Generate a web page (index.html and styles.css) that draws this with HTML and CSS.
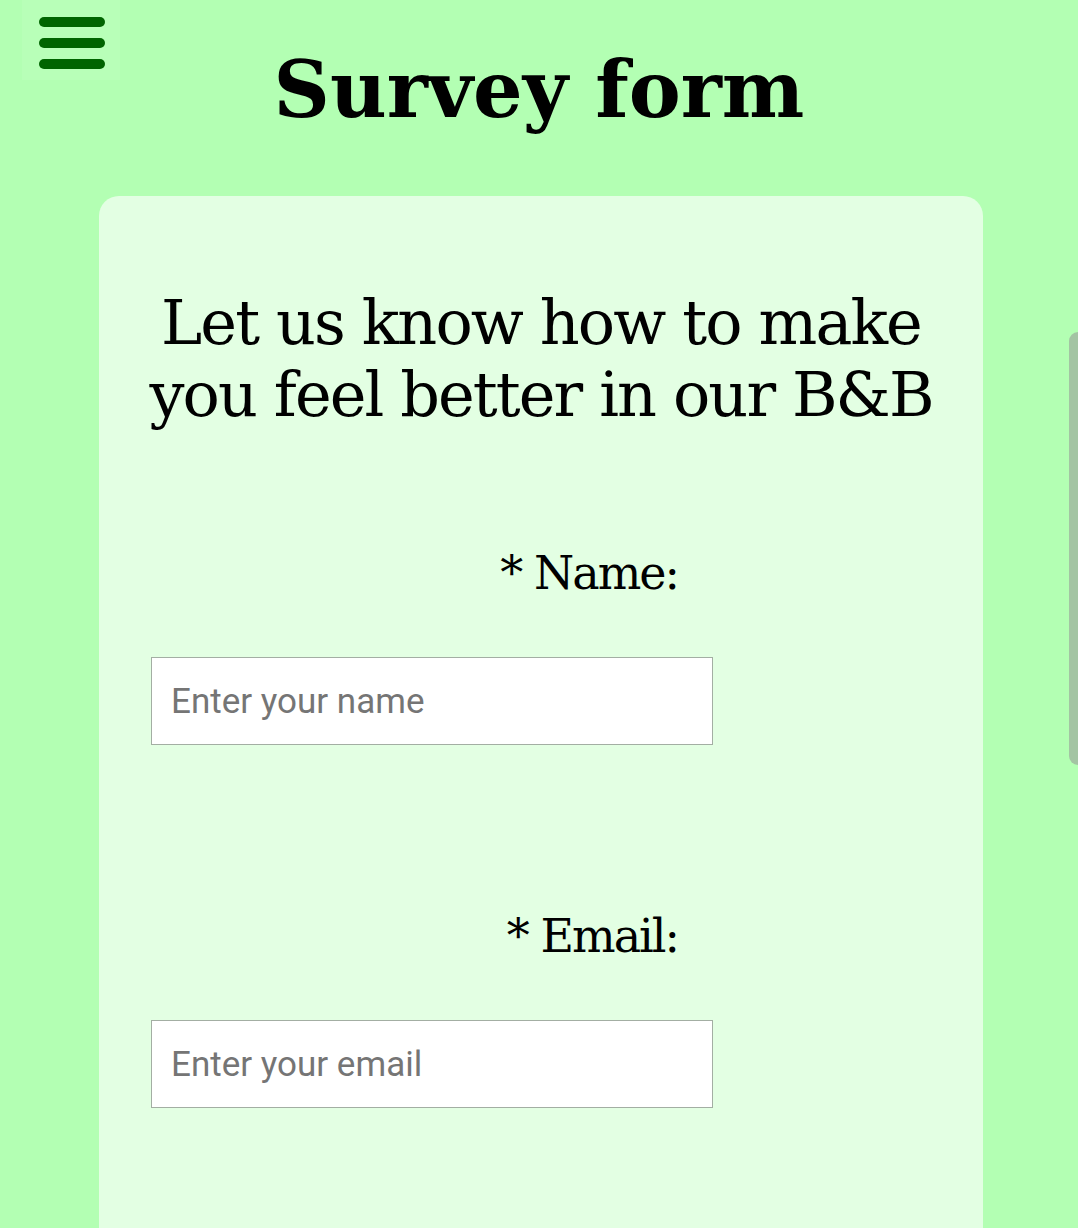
FILE: index.html
```html
<!DOCTYPE html>
<html lang="en">
<head>
<meta charset="utf-8">
<title>Survey form</title>
<link rel="stylesheet" href="styles.css">
</head>
<body>
<button class="menu-btn" aria-label="Menu">
  <span class="bar"></span>
  <span class="bar"></span>
  <span class="bar"></span>
</button>
<header class="header">
  <h1 class="title">Survey form</h1>
</header>
<main class="card">
  <h2 class="subtitle">Let us know how to make you feel better in our B&amp;B</h2>
  <form class="form">
    <div class="field">
      <label class="label" for="name">* Name:</label>
      <input class="input" id="name" type="text" placeholder="Enter your name">
    </div>
    <div class="field">
      <label class="label" for="email">* Email:</label>
      <input class="input" id="email" type="email" placeholder="Enter your email">
    </div>
  </form>
</main>
<div class="scroll-thumb"></div>
</body>
</html>
```

FILE: styles.css
```css
html, body {
  margin: 0;
  padding: 0;
}
body {
  background: #b3ffb3;
  font-family: "DejaVu Serif", "Liberation Serif", serif;
  color: #000;
  overflow: hidden;
}
.menu-btn {
  position: fixed;
  top: 0;
  left: 22px;
  width: 98px;
  height: 80px;
  background: #b8ffb8;
  border: none;
  padding: 17px 0 0 17px;
  display: flex;
  flex-direction: column;
  gap: 11px;
  box-sizing: border-box;
}
.bar {
  display: block;
  width: 66px;
  height: 10px;
  border-radius: 5px;
  background: #006400;
}
.header {
  display: flex;
  justify-content: center;
  padding-top: 40px;
}
.title {
  margin: 0;
  font-size: 78px;
  line-height: 100px;
  font-weight: 700;
}
.card {
  margin: 56px 95px 0 99px;
  background: #e3ffe3;
  border-radius: 20px 20px 0 0;
  padding: 90px 52px 200px;
}
.subtitle {
  margin: 0 -20px;
  font-weight: 400;
  font-size: 62px;
  line-height: 72px;
  letter-spacing: -1.9px;
  text-align: center;
  padding-top: 1px;
}
.form {
  display: flex;
  flex-direction: column;
  gap: 161px;
  margin-top: 112px;
}
.field {
  display: flex;
  flex-direction: column;
  width: 562px;
  gap: 54px;
}
.label {
  font-size: 46px;
  line-height: 60px;
  letter-spacing: -2px;
  text-align: right;
  padding-right: 35px;
}
.input {
  box-sizing: border-box;
  width: 562px;
  height: 88px;
  border: 1px solid #a3aea3;
  border-radius: 0;
  background: #fff;
  padding: 0 19px;
  font-family: Roboto, "Liberation Sans", sans-serif;
  font-size: 35px;
  color: #000;
  outline: none;
}
.input::placeholder {
  color: #757575;
}
.scroll-thumb {
  position: fixed;
  right: 0;
  top: 332px;
  width: 9px;
  height: 433px;
  background: #a3c4a3;
  border-radius: 9px 0 0 9px;
}
```
